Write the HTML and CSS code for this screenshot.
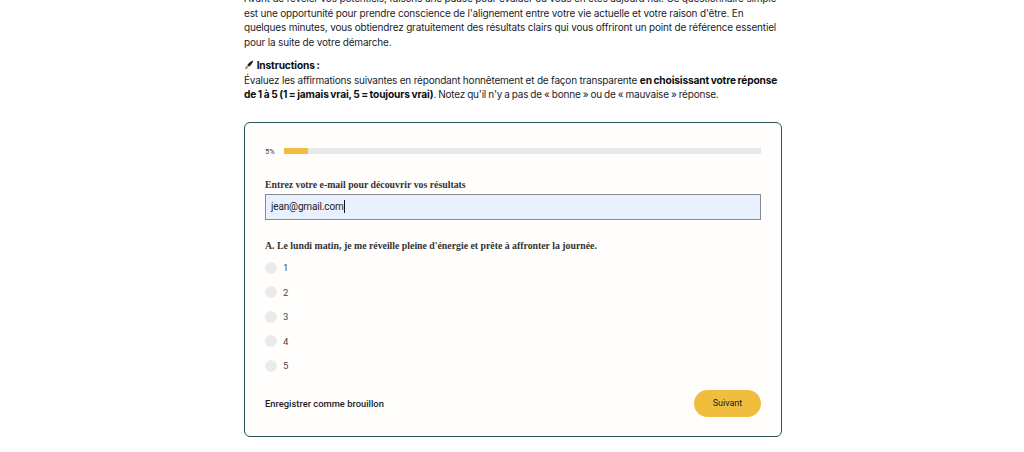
FILE: index.html
```html
<!DOCTYPE html>
<html lang="fr">
<head>
    <meta charset="UTF-8">
    <meta name="viewport" content="width=device-width, initial-scale=1.0">
    <title>Questionnaire</title>
    <link rel="stylesheet" href="styles.css">
</head>
<body>
    <div class="page">
        <div class="intro">
            <p>Avant de révéler vos potentiels, faisons une pause pour évaluer où vous en êtes aujourd'hui. Ce questionnaire simple est une opportunité pour prendre conscience de l'alignement entre votre vie actuelle et votre raison d'être. En quelques minutes, vous obtiendrez gratuitement des résultats clairs qui vous offriront un point de référence essentiel pour la suite de votre démarche.</p>
            <p class="instructions">
                <svg class="pen" viewBox="0 0 10 10" width="10" height="10"><path d="M9.4 .6 C7.4 1 4.6 3 3.2 5 L5 6.8 C7 5.4 9 2.6 9.4 .6Z" fill="#222"/><path d="M2.8 5.5 L4.5 7.2 C3.6 8.6 2 9 .6 9.2 C1.4 8.4 1.2 6.6 2.8 5.5Z" fill="#b98a52"/></svg>
                <strong>Instructions :</strong><br>
                Évaluez les affirmations suivantes en répondant honnêtement et de façon transparente <strong>en choisissant votre réponse de 1 à 5 (1 = jamais vrai, 5 = toujours vrai)</strong><span class="note">. Notez qu'il n'y a pas de « bonne » ou de « mauvaise » réponse.</span>
            </p>
        </div>

        <form class="card">
            <div class="progress">
                <span class="progress-label">5%</span>
                <div class="progress-track"><div class="progress-fill" style="width: 5%"></div></div>
            </div>

            <div class="field-label">Entrez votre e-mail pour découvrir vos résultats</div>
            <div class="email-input">jean@gmail.com<span class="caret"></span></div>

            <div class="question">A. Le lundi matin, je me réveille pleine d'énergie et prête à affronter la journée.</div>
            <div class="options">
                <label class="option"><input type="radio" name="a"><span>1</span></label>
                <label class="option"><input type="radio" name="a"><span>2</span></label>
                <label class="option"><input type="radio" name="a"><span>3</span></label>
                <label class="option"><input type="radio" name="a"><span>4</span></label>
                <label class="option"><input type="radio" name="a"><span>5</span></label>
            </div>

            <div class="card-footer">
                <a class="draft" href="#">Enregistrer comme brouillon</a>
                <button class="next" type="button">Suivant</button>
            </div>
        </form>
    </div>
</body>
</html>
```

FILE: styles.css
```css
html, body {
    height: 452px;
    overflow: hidden;
}

body {
    margin: 0;
    background-color: #fff;
    color: #1c1c1c;
    font-family: Inter, "Liberation Sans", sans-serif;
}

.page {
    width: 538px;
    margin: -9px auto 0 244px;
}

.intro {
    font-size: 10px;
    line-height: 14.5px;
    letter-spacing: -0.17px;
    color: #20242a;
}

.intro p {
    margin: 0 0 9px;
}

.intro .instructions {
    letter-spacing: -0.2px;
}

.intro strong {
    font-size: 10.2px;
    font-weight: 700;
    letter-spacing: -0.15px;
    word-spacing: -0.6px;
    color: #0b0f14;
}

.intro .note {
    letter-spacing: -0.2px;
    word-spacing: -0.5px;
}

.pen {
    vertical-align: -1px;
}

.card {
    box-sizing: border-box;
    height: 315px;
    margin-top: 20px;
    padding: 25px 20px 20px;
    background-color: #fffefc;
    border: 1px solid #2f5058;
    border-radius: 6px;
    font-family: Roboto, "Liberation Sans", sans-serif;
}

.progress {
    display: flex;
    align-items: center;
    gap: 9px;
    height: 7px;
}

.progress-label {
    font-size: 7.5px;
    color: #444;
    width: 10px;
}

.progress-track {
    flex: 1;
    height: 6px;
    background-color: #e8e8e8;
}

.progress-fill {
    height: 100%;
    background-color: #f0bd3e;
}

.field-label, .question {
    font-family: "Liberation Serif", serif;
    font-size: 9.8px;
    font-weight: bold;
    line-height: 12px;
    color: #333;
}

.field-label {
    margin-top: 24px;
}

.email-input {
    box-sizing: border-box;
    display: flex;
    align-items: center;
    height: 26px;
    margin-top: 3px;
    padding: 0 5px;
    background-color: #e8f0fe;
    border: 1px solid #868b94;
    font-size: 10px;
    letter-spacing: -0.15px;
    color: #222;
}

.caret {
    width: 1px;
    height: 13px;
    background-color: #111;
}

.question {
    margin-top: 20px;
}

.options {
    display: flex;
    flex-direction: column;
    gap: 12.5px;
    margin-top: 10px;
}

.option {
    display: flex;
    align-items: center;
    gap: 6px;
    height: 12px;
    font-size: 9.5px;
    color: #444;
}

.option input {
    appearance: none;
    width: 12px;
    height: 12px;
    margin: 0;
    border-radius: 50%;
    background-color: #ebebeb;
}

.card-footer {
    display: flex;
    justify-content: space-between;
    align-items: center;
    margin-top: 18px;
}

.draft {
    font-size: 9.4px;
    font-weight: 500;
    color: #1c1c1c;
    text-decoration: none;
}

.next {
    width: 67px;
    height: 27px;
    border: none;
    border-radius: 14px;
    background-color: #f0bd3e;
    font-family: inherit;
    font-size: 9px;
    font-weight: 400;
    color: #222;
}
```
